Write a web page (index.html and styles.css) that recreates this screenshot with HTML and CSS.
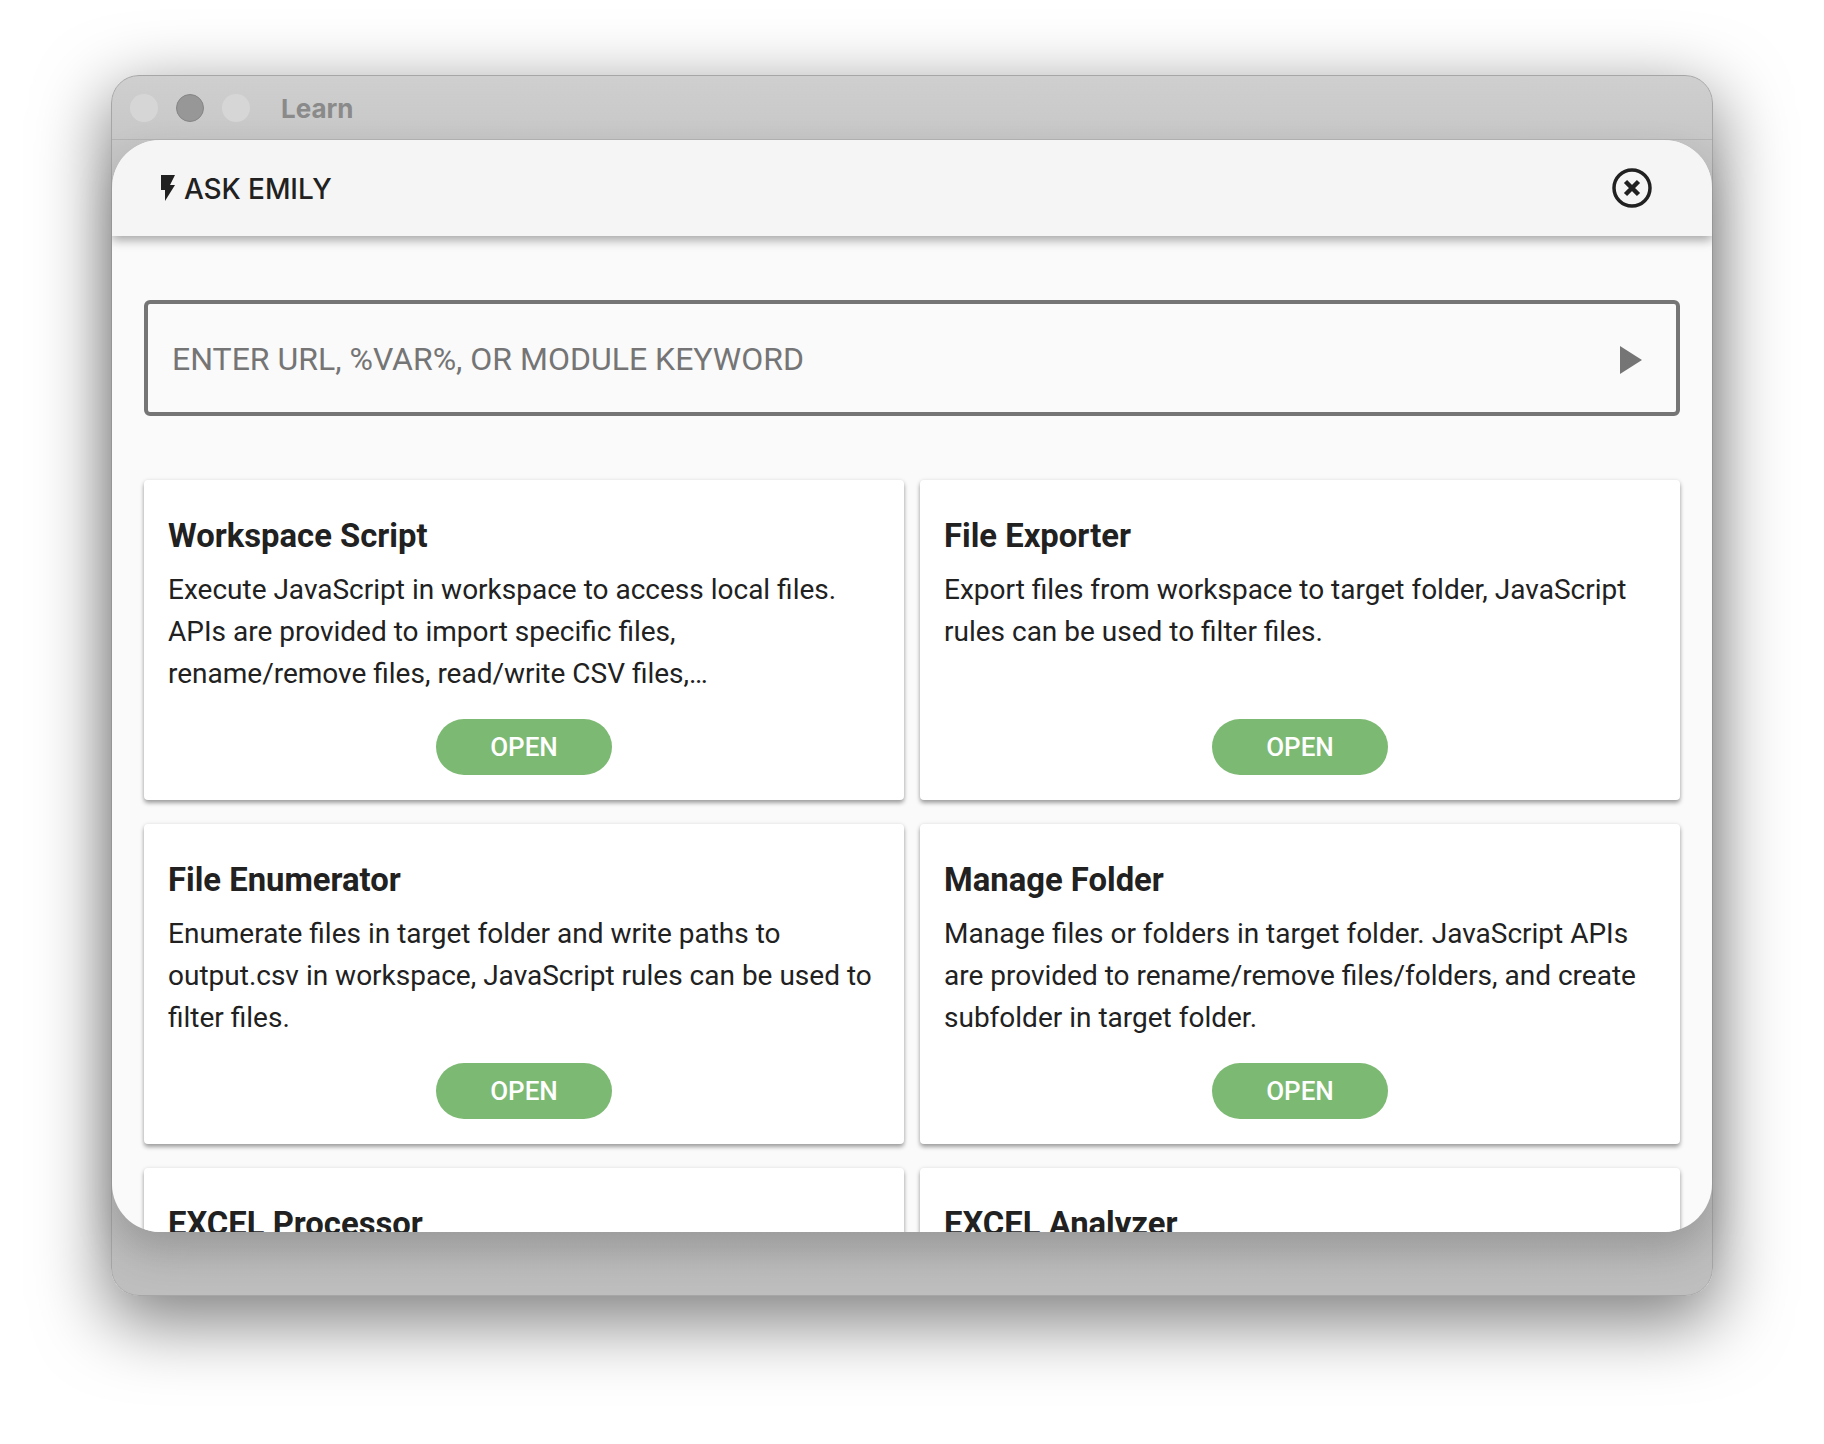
FILE: index.html
```html
<!DOCTYPE html>
<html>
<head>
    <link rel="stylesheet" href="styles.css">
</head>
<body>
    <div class="window">
        <div class="titlebar">
            <span class="light"></span>
            <span class="light light-on"></span>
            <span class="light"></span>
            <span class="window-title">Learn</span>
        </div>
        <div class="panel">
            <div class="panel-header">
                <div class="panel-title">
                    <svg class="bolt" viewBox="0 0 14 26"><path d="M0 0H14L9 10H14L4 26V15H0Z"/></svg>
                    <span>ASK EMILY</span>
                </div>
                <svg class="close" viewBox="0 0 40 40">
                    <circle cx="20" cy="20" r="18" fill="none" stroke="#212121" stroke-width="3.500"/>
                    <path d="M13.500 13.500L26.500 26.500M26.500 13.500L13.500 26.500" stroke="#212121" stroke-width="4.500" fill="none"/>
                </svg>
            </div>
            <div class="panel-body">
                <div class="search">
                    <span class="search-text">ENTER URL, %VAR%, OR MODULE KEYWORD</span>
                    <svg class="play" viewBox="0 0 22 28"><path d="M0 0L22 14L0 28Z"/></svg>
                </div>
                <div class="cards">
                    <div class="card">
                        <h2>Workspace Script</h2>
                        <p>Execute JavaScript in workspace to access local files. APIs are provided to import specific files, rename/remove files, read/write CSV files,…</p>
                        <button>OPEN</button>
                    </div>
                    <div class="card">
                        <h2>File Exporter</h2>
                        <p>Export files from workspace to target folder, JavaScript rules can be used to filter files.</p>
                        <button>OPEN</button>
                    </div>
                    <div class="card">
                        <h2>File Enumerator</h2>
                        <p>Enumerate files in target folder and write paths to output.csv in workspace, JavaScript rules can be used to filter files.</p>
                        <button>OPEN</button>
                    </div>
                    <div class="card">
                        <h2>Manage Folder</h2>
                        <p>Manage files or folders in target folder. JavaScript APIs are provided to rename/remove files/folders, and create subfolder in target folder.</p>
                        <button>OPEN</button>
                    </div>
                    <div class="card">
                        <h2>EXCEL Processor</h2>
                    </div>
                    <div class="card">
                        <h2>EXCEL Analyzer</h2>
                    </div>
                </div>
            </div>
        </div>
    </div>
</body>
</html>
```

FILE: styles.css
```css
html, body {
    height: 100%;
}
body {
    margin: 0;
    padding: 75px 111px 0;
    box-sizing: border-box;
    background: #fff;
    font-family: Roboto, sans-serif;
    color: #212121;
    overflow: hidden;
}
.window {
    width: 1602px;
    height: 1221px;
    box-sizing: border-box;
    border-radius: 28px;
    border: 1px solid #a6a6a6;
    background: linear-gradient(#cfcfcf 0%, #c6c6c6 6%, #bebebe 100%);
    box-shadow: 0 22px 70px 4px rgba(0,0,0,0.5);
    display: flex;
    flex-direction: column;
}
.titlebar {
    height: 63px;
    flex: none;
    display: flex;
    align-items: center;
    padding-left: 18px;
    gap: 18px;
    border-bottom: 1px solid #b4b4b4;
}
.light {
    width: 28px;
    height: 28px;
    border-radius: 50%;
    background: #d6d6d6;
}
.light-on {
    background: #979797;
    border: 1px solid #858585;
    box-sizing: border-box;
}
.window-title {
    margin: 2px 0 0 13px;
    font-family: Inter, sans-serif;
    font-size: 26px;
    font-weight: 700;
    color: #8a8a8a;
}
.panel {
    height: 1092px;
    flex: none;
    border-radius: 48px;
    background: #fafafa;
    overflow: hidden;
    box-shadow: 0 20px 40px rgba(0,0,0,0.2);
}
.panel-header {
    height: 96px;
    box-sizing: border-box;
    padding: 0 60px 0 49px;
    background: #f5f5f5;
    display: flex;
    align-items: center;
    justify-content: space-between;
    box-shadow: 0 4px 10px rgba(0,0,0,0.35);
    position: relative;
}
.panel-title {
    display: flex;
    align-items: center;
    gap: 9px;
    margin-top: 2px;
    font-family: Inter, sans-serif;
    font-size: 28px;
    font-weight: 500;
    letter-spacing: -0.1px;
}
.bolt {
    width: 14px;
    height: 26px;
    margin-top: -2px;
    fill: #212121;
}
.close {
    width: 40px;
    height: 40px;
}
.panel-body {
    padding: 64px 32px 0;
}
.search {
    height: 116px;
    box-sizing: border-box;
    border: 4px solid #757575;
    border-radius: 6px;
    padding: 4px 34px 0 24px;
    display: flex;
    align-items: center;
    justify-content: space-between;
    font-size: 32px;
    color: #757575;
}
.search-text {
    margin-bottom: 2px;
}
.play {
    width: 22px;
    height: 28px;
    fill: #757575;
}
.cards {
    margin-top: 64px;
    display: grid;
    grid-template-columns: 1fr 1fr;
    gap: 24px 16px;
}
.card {
    height: 320px;
    box-sizing: border-box;
    padding: 36px 24px 0;
    background: #fff;
    border-radius: 4px;
    box-shadow: 0 3px 4px rgba(0,0,0,0.35), 0 0 4px rgba(0,0,0,0.08);
    position: relative;
}
.card h2 {
    margin: 0 0 13px;
    font-size: 32.800px;
    line-height: 40px;
    font-weight: 700;
}
.card p {
    margin: 0;
    font-size: 28px;
    line-height: 42px;
}
.card button {
    position: absolute;
    left: 50%;
    bottom: 25px;
    transform: translateX(-50%);
    width: 176px;
    height: 56px;
    border: none;
    border-radius: 28px;
    background: #7cb972;
    color: #fff;
    font-family: Roboto, sans-serif;
    font-size: 26px;
    font-weight: 500;
}
```
